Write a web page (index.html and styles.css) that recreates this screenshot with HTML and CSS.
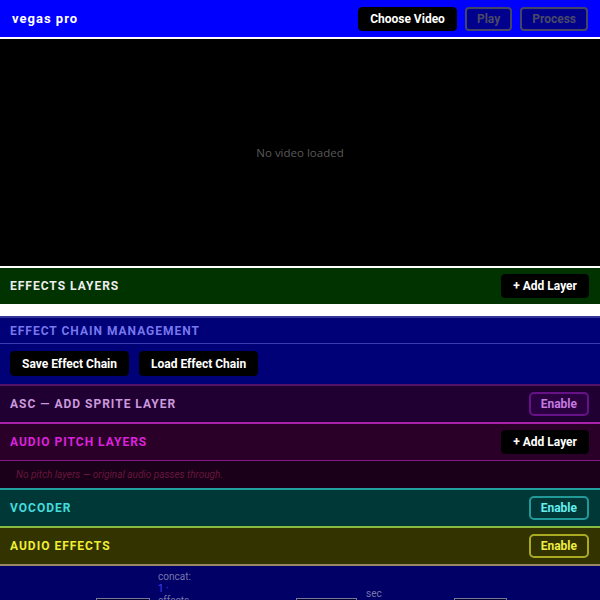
FILE: index.html
```html
<!DOCTYPE html>
<html lang="en">
<head>
<meta charset="utf-8">
<title>vegas pro</title>
<link rel="stylesheet" href="styles.css">
</head>
<body>
  <header class="topbar">
    <div class="brand">vegas pro</div>
    <div class="top-actions">
      <button class="btn">Choose Video</button>
      <button class="btn btn-off">Play</button>
      <button class="btn btn-off">Process</button>
    </div>
  </header>

  <div class="video">No video loaded</div>

  <section class="bar bar-layers">
    <h2 class="bar-title">Effects Layers</h2>
    <button class="btn">+ Add Layer</button>
  </section>
  <div class="layer-list"></div>

  <section class="chain">
    <h2 class="chain-title">Effect Chain Management</h2>
    <div class="chain-actions">
      <button class="btn">Save Effect Chain</button>
      <button class="btn">Load Effect Chain</button>
    </div>
  </section>

  <section class="bar bar-asc">
    <h2 class="bar-title">ASC — Add Sprite Layer</h2>
    <button class="btn-outline">Enable</button>
  </section>

  <section class="bar bar-pitch">
    <h2 class="bar-title">Audio Pitch Layers</h2>
    <button class="btn">+ Add Layer</button>
  </section>
  <div class="pitch-empty">No pitch layers — original audio passes through.</div>

  <section class="bar bar-vocoder">
    <h2 class="bar-title">Vocoder</h2>
    <button class="btn-outline">Enable</button>
  </section>

  <section class="bar bar-audiofx">
    <h2 class="bar-title">Audio Effects</h2>
    <button class="btn-outline">Enable</button>
  </section>

  <section class="timeline">
    <div class="tl-col tl-a"><span class="tl-box"></span></div>
    <div class="tl-col tl-b">
      <span class="tl-note">concat:</span>
      <span class="tl-num">1 ·</span>
      <span class="tl-note">effects</span>
    </div>
    <div class="tl-col tl-c"><span class="tl-box tl-box-wide"></span></div>
    <div class="tl-col tl-d"><span class="tl-note">sec</span></div>
    <div class="tl-col tl-e"><span class="tl-box"></span></div>
  </section>
</body>
</html>
```

FILE: styles.css
```css
* { box-sizing: border-box; }

html, body {
  margin: 0;
  padding: 0;
}

body {
  background: #000066;
  font-family: Roboto, "Liberation Sans", sans-serif;
  color: #fff;
  overflow: hidden;
  height: 600px;
}

h2 { margin: 0; }

button {
  font-family: Roboto, "Liberation Sans", sans-serif;
  cursor: pointer;
}

/* top bar */
.topbar {
  height: 39px;
  background: #0000ff;
  border-bottom: 2px solid #ffffff;
  display: flex;
  align-items: center;
  justify-content: space-between;
  padding: 0 12px 0 12px;
}

.brand {
  font-size: 13px;
  font-weight: 700;
  letter-spacing: 1px;
}

.top-actions {
  display: flex;
  gap: 8px;
  padding-top: 1px;
}

.btn {
  height: 24px;
  padding: 0 11px;
  background: #000;
  color: #fff;
  border: 1px solid #000;
  border-radius: 4px;
  font-size: 12px;
  font-weight: 700;
  line-height: 22px;
}

.btn-off {
  background: rgba(0, 0, 0, 0.45);
  color: #4a4a66;
  border: 2px solid #444466;
  line-height: 20px;
  padding: 0 10px;
}

/* video */
.video {
  height: 229px;
  background: #000;
  border-bottom: 2px solid #fff;
  display: flex;
  align-items: center;
  justify-content: center;
  font-family: "Open Sans", "Noto Sans", sans-serif;
  font-size: 11.5px;
  color: #5a5a5a;
}

/* section bars */
.bar {
  height: 36px;
  display: flex;
  align-items: center;
  justify-content: space-between;
  padding: 0 11px 0 10px;
}

.bar-title {
  font-size: 12px;
  font-weight: 700;
  letter-spacing: 1px;
  text-transform: uppercase;
}

.bar-layers {
  background: #003300;
  color: #eeeeee;
}

.layer-list {
  height: 12px;
  background: #ffffff;
}

/* chain management */
.chain {
  background: #000077;
  border-top: 2px solid #333399;
}

.chain-title {
  height: 26px;
  line-height: 26px;
  padding-left: 10px;
  font-size: 12px;
  font-weight: 700;
  letter-spacing: 1px;
  text-transform: uppercase;
  color: #7777ee;
  border-bottom: 1px solid #3a3ab0;
}

.chain-actions {
  display: flex;
  gap: 10px;
  padding: 7px 10px 8px 10px;
}

.chain-actions .btn {
  height: 25px;
}

.btn-outline {
  height: 24px;
  padding: 0 10px;
  border-radius: 5px;
  font-size: 12px;
  font-weight: 700;
  background: transparent;
  border: 2px solid currentColor;
  line-height: 20px;
}

.bar-asc {
  background: #200033;
  border-top: 2px solid #551166;
  height: 38px;
  color: #cc99dd;
}

.bar-asc .btn-outline {
  color: #c57ae0;
  border-color: #661188;
  background: #2a0040;
}

.bar-pitch {
  background: #2a0028;
  border-top: 2px solid #aa22aa;
  border-bottom: 1px solid #881888;
  height: 39px;
  color: #dd22dd;
}

.pitch-empty {
  height: 27px;
  background: #1a0018;
  padding-left: 16px;
  font-size: 10px;
  font-style: italic;
  line-height: 27px;
  color: #66173d;
}

.bar-vocoder {
  background: #003838;
  border-top: 2px solid #22a0a0;
  height: 38px;
  color: #44dddd;
}

.bar-vocoder .btn-outline {
  color: #66eeee;
  border-color: #229999;
}

.bar-audiofx {
  background: #333300;
  border-top: 2px solid #88bb44;
  border-bottom: 2px solid #998866;
  height: 40px;
  color: #eeee33;
}

.bar-audiofx .btn-outline {
  color: #eeee44;
  border-color: #aaaa22;
}

/* timeline strip */
.timeline {
  background: #000066;
  display: flex;
  align-items: flex-end;
  height: 40px;
  font-family: Roboto, "Liberation Sans", sans-serif;
  font-size: 10px;
  line-height: 12px;
}

.tl-col {
  display: flex;
  flex-direction: column;
}

.tl-a { margin-left: 96px; width: 54px; }
.tl-b { margin-left: 8px; width: 40px; padding-top: 5px; align-self: flex-start; }
.tl-c { margin-left: 98px; width: 61px; }
.tl-d { margin-left: 9px; width: 40px; align-self: flex-start; padding-top: 22px; }
.tl-e { margin-left: 48px; width: 53px; }

.tl-box {
  display: block;
  height: 8px;
  border: 1px solid #777799;
  border-bottom: none;
  background: #000033;
}

.tl-note { color: #7777aa; }
.tl-num { color: #4444ff; }
```
